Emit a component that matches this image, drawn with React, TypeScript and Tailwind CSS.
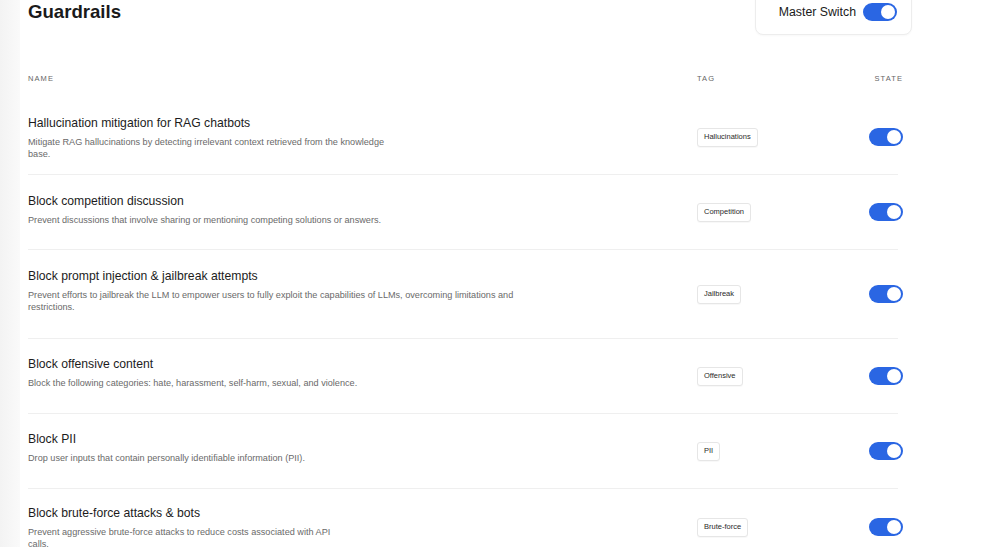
const rules = [
  {
    title: "Hallucination mitigation for RAG chatbots",
    desc: "Mitigate RAG hallucinations by detecting irrelevant context retrieved from the knowledge base.",
    tag: "Hallucinations",
    h: "h-[74px]",
    pt: "pt-[15px]",
    max: "max-w-[365px]",
  },
  {
    title: "Block competition discussion",
    desc: "Prevent discussions that involve sharing or mentioning competing solutions or answers.",
    tag: "Competition",
    h: "h-[74px]",
    pt: "pt-[18px]",
    max: "max-w-[500px]",
  },
  {
    title: "Block prompt injection & jailbreak attempts",
    desc: "Prevent efforts to jailbreak the LLM to empower users to fully exploit the capabilities of LLMs, overcoming limitations and restrictions.",
    tag: "Jailbreak",
    h: "h-[88px]",
    pt: "pt-[18px]",
    max: "max-w-[500px]",
  },
  {
    title: "Block offensive content",
    desc: "Block the following categories: hate, harassment, self-harm, sexual, and violence.",
    tag: "Offensive",
    h: "h-[74px]",
    pt: "pt-[17px]",
    max: "max-w-[500px]",
  },
  {
    title: "Block PII",
    desc: "Drop user inputs that contain personally identifiable information (PII).",
    tag: "PII",
    h: "h-[74px]",
    pt: "pt-[17px]",
    max: "max-w-[500px]",
  },
  {
    title: "Block brute-force attacks & bots",
    desc: "Prevent aggressive brute-force attacks to reduce costs associated with API calls.",
    tag: "Brute-force",
    h: "h-[76px]",
    pt: "pt-[16px]",
    max: "max-w-[315px]",
  },
];

function Toggle() {
  return (
    <div className="flex h-[18px] w-[34px] shrink-0 items-center justify-end rounded-full bg-[#2a66e3] p-[2px]">
      <div className="h-[14px] w-[14px] rounded-full bg-white" />
    </div>
  );
}

export default function App() {
  return (
    <div className="flex h-screen overflow-hidden bg-white font-['Liberation_Sans',Arial,sans-serif] text-[#1c1c1c]">
      <aside className="w-[20px] shrink-0 bg-linear-to-r from-[#f3f3f3] to-[#fafafa]" />

      <main className="flex-1 pl-[8px] pr-[90px]">
        <header className="flex items-start justify-between">
          <h1 className="mt-[1px] text-[18.6px] font-bold leading-[22px] text-[#1a1a1a]">
            Guardrails
          </h1>
          <div className="-mr-[9px] -mt-[11px] flex items-center gap-[7px] rounded-[8px] border border-[#ededed] bg-white pb-[13px] pl-[23px] pr-[14px] pt-[13px] shadow-[0_1px_2px_rgba(0,0,0,0.03)]">
            <span className="text-[12.3px] leading-[16px] text-[#1a1a1a]">Master Switch</span>
            <Toggle />
          </div>
        </header>

        <div className="mt-[38px] flex h-[11px] items-center text-[7.5px] uppercase tracking-[1.1px] text-[#666666]">
          <div className="flex-1">Name</div>
          <div className="w-[172px]">Tag</div>
          <div className="flex w-[34px] justify-end">State</div>
        </div>

        <div className="mt-[16px]">
          {rules.map((r, i) => (
            <div key={r.title}>
              {i > 0 && <div className="mr-[5px] h-px bg-[#efefef]" />}
              <div className={`flex ${r.h}`}>
                <div className={`flex-1 ${r.pt}`}>
                  <div className="text-[12.2px] leading-[16px] text-[#1c1c1c]">{r.title}</div>
                  <p className={`mt-[6px] text-[9.15px] leading-[11.5px] text-[#6a6a6a] ${r.max}`}>
                    {r.desc}
                  </p>
                </div>
                <div className="flex w-[172px] items-center">
                  <span className="flex h-[19px] items-center rounded-[3px] border border-[#e6e6e6] bg-white px-[6px] text-[7.5px] text-[#2a2a2a] shadow-[0_1px_1px_rgba(0,0,0,0.03)]">
                    {r.tag}
                  </span>
                </div>
                <div className="flex w-[34px] items-center">
                  <Toggle />
                </div>
              </div>
            </div>
          ))}
        </div>
      </main>
    </div>
  );
}
